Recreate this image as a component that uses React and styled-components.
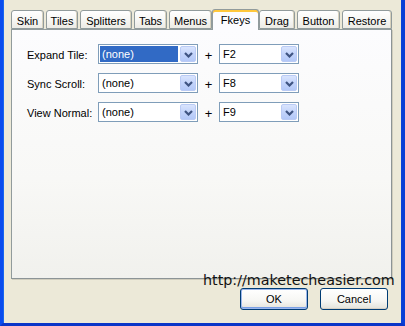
import styled, { createGlobalStyle } from "styled-components";

const GlobalStyle = createGlobalStyle`
  html, body {
    margin: 0;
    padding: 0;
    background: #ece9d8;
  }
  * {
    box-sizing: border-box;
  }
`;

const TABS = [
  { name: "Skin", w: 33 },
  { name: "Tiles", w: 32 },
  { name: "Splitters", w: 52 },
  { name: "Tabs", w: 33 },
  { name: "Menus", w: 43 },
  { name: "Fkeys", w: 43, active: true },
  { name: "Drag", w: 36 },
  { name: "Button", w: 43 },
  { name: "Restore", w: 50 },
];

const ROWS = [
  { label: "Expand Tile:", mod: "(none)", key: "F2", selected: true },
  { label: "Sync Scroll:", mod: "(none)", key: "F8" },
  { label: "View Normal:", mod: "(none)", key: "F9" },
];

const Chevron = () => (
  <svg width="9" height="6" viewBox="0 0 9 6">
    <path
      d="M1 1 L4.5 4.5 L8 1"
      fill="none"
      stroke="#3f5482"
      strokeWidth="2.2"
    />
  </svg>
);

const Combo = ({ value, width, selected }) => (
  <ComboBox $w={width}>
    <ComboText $selected={selected}>{value}</ComboText>
    <ArrowButton>
      <Chevron />
    </ArrowButton>
  </ComboBox>
);

export default function App() {
  return (
    <>
      <GlobalStyle />
      <Window>
        <TabStrip>
          {TABS.map((t) => (
            <Tab key={t.name} $w={t.w} $active={t.active}>
              {t.name}
            </Tab>
          ))}
        </TabStrip>
        <Panel>
          {ROWS.map((r) => (
            <Row key={r.label}>
              <Label>{r.label}</Label>
              <Combo value={r.mod} width={100} selected={r.selected} />
              <Plus>+</Plus>
              <Combo value={r.key} width={80} />
            </Row>
          ))}
        </Panel>
        <ButtonBar>
          <Button $default>OK</Button>
          <Button>Cancel</Button>
        </ButtonBar>
        <Watermark>http://maketecheasier.com</Watermark>
      </Window>
    </>
  );
}

const Window = styled.div`
  position: relative;
  width: 405px;
  height: 326px;
  background: #ece9d8;
  border-left: 3px solid #0a4cee;
  border-right: 3px solid #0a3fd6;
  border-bottom: 3px solid #0a35c8;
  box-shadow: inset 1px 0 0 #1766f0, inset -1px 0 0 #0a43d8;
  padding: 9px 10px 0 8px;
  font-family: "Liberation Sans", Arial, sans-serif;
  font-size: 11px;
  color: #000;
  display: flex;
  flex-direction: column;
`;

const TabStrip = styled.div`
  display: flex;
  align-items: flex-end;
  height: 20px;
  position: relative;
  z-index: 1;
`;

const Tab = styled.div`
  width: ${(p) => (p.$active ? p.$w + 4 : p.$w)}px;
  height: ${(p) => (p.$active ? 21 : 19)}px;
  margin-left: ${(p) => (p.$active ? 0 : 2)}px;
  margin-right: ${(p) => (p.$active ? -2 : 0)}px;
  margin-bottom: ${(p) => (p.$active ? -1 : 0)}px;
  &:first-child {
    margin-left: 0;
  }
  display: flex;
  align-items: center;
  justify-content: center;
  padding-top: ${(p) => (p.$active ? 0 : 2)}px;
  border: 1px solid #919b9c;
  border-bottom: ${(p) => (p.$active ? "none" : "1px solid #919b9c")};
  border-radius: 3px 3px 0 0;
  background: ${(p) =>
    p.$active
      ? "#fcfcfe"
      : "linear-gradient(#ffffff 0%, #f7f7f4 50%, #ecebe5 100%)"};
  box-shadow: ${(p) =>
    p.$active
      ? "inset 0 2px 0 #ffc83c, inset 0 1px 0 #e68b2c"
      : "inset -1px 0 0 #d8d2bd"};
  white-space: nowrap;
`;

const Panel = styled.div`
  width: 381px;
  height: 250px;
  border: 1px solid #919b9c;
  border-right-color: #8c9496;
  border-bottom-color: #8c9496;
  box-shadow: 1px 1px 0 #d0cdbd;
  background: linear-gradient(#fcfcfe 0%, #f8f8f6 60%, #f1f1ed 100%);
  padding: 14px 0 0 15px;
  display: flex;
  flex-direction: column;
  gap: 9px;
`;

const Row = styled.div`
  display: grid;
  grid-template-columns: 71px 100px 21px 80px;
  align-items: center;
  height: 20px;
`;

const Label = styled.span`
  white-space: nowrap;
  padding-top: 1px;
`;

const Plus = styled.span`
  text-align: center;
  font-size: 13px;
  padding-top: 3px;
`;

const ComboBox = styled.div`
  width: ${(p) => p.$w}px;
  height: 20px;
  border: 1px solid #7f9db9;
  background: #fff;
  display: flex;
  align-items: stretch;
  padding: 1px;
`;

const ComboText = styled.div`
  flex: 1;
  display: flex;
  align-items: center;
  padding-left: 2px;
  margin-right: 2px;
  font-size: 11px;
  background: ${(p) => (p.$selected ? "#316ac5" : "transparent")};
  color: ${(p) => (p.$selected ? "#fff" : "#000")};
`;

const ArrowButton = styled.div`
  width: 16px;
  display: flex;
  align-items: center;
  justify-content: center;
  border: 1px solid #bacbf5;
  border-radius: 2px;
  background: linear-gradient(#d9e4fd 0%, #c3d4fb 50%, #b3c8f8 100%);
  padding-top: 1px;
`;

const ButtonBar = styled.div`
  display: flex;
  justify-content: flex-end;
  gap: 12px;
  margin-top: 9px;
  padding-right: 4px;
`;

const Button = styled.div`
  width: 68px;
  height: 22px;
  border: 1px solid #003c74;
  border-radius: 3px;
  background: linear-gradient(#ffffff 0%, #f6f6f3 60%, #e3e2da 100%);
  box-shadow: ${(p) =>
    p.$default
      ? "inset 0 0 0 1px #9cb7ec, inset 0 -1px 0 1px #7aa0e6"
      : "inset 0 -1px 0 #d6d0c5"};
  display: flex;
  align-items: center;
  justify-content: center;
`;

const Watermark = styled.div`
  position: absolute;
  left: 200px;
  top: 272px;
  font-family: "DejaVu Sans", Verdana, sans-serif;
  font-size: 14.3px;
  color: #111;
  white-space: nowrap;
`;
